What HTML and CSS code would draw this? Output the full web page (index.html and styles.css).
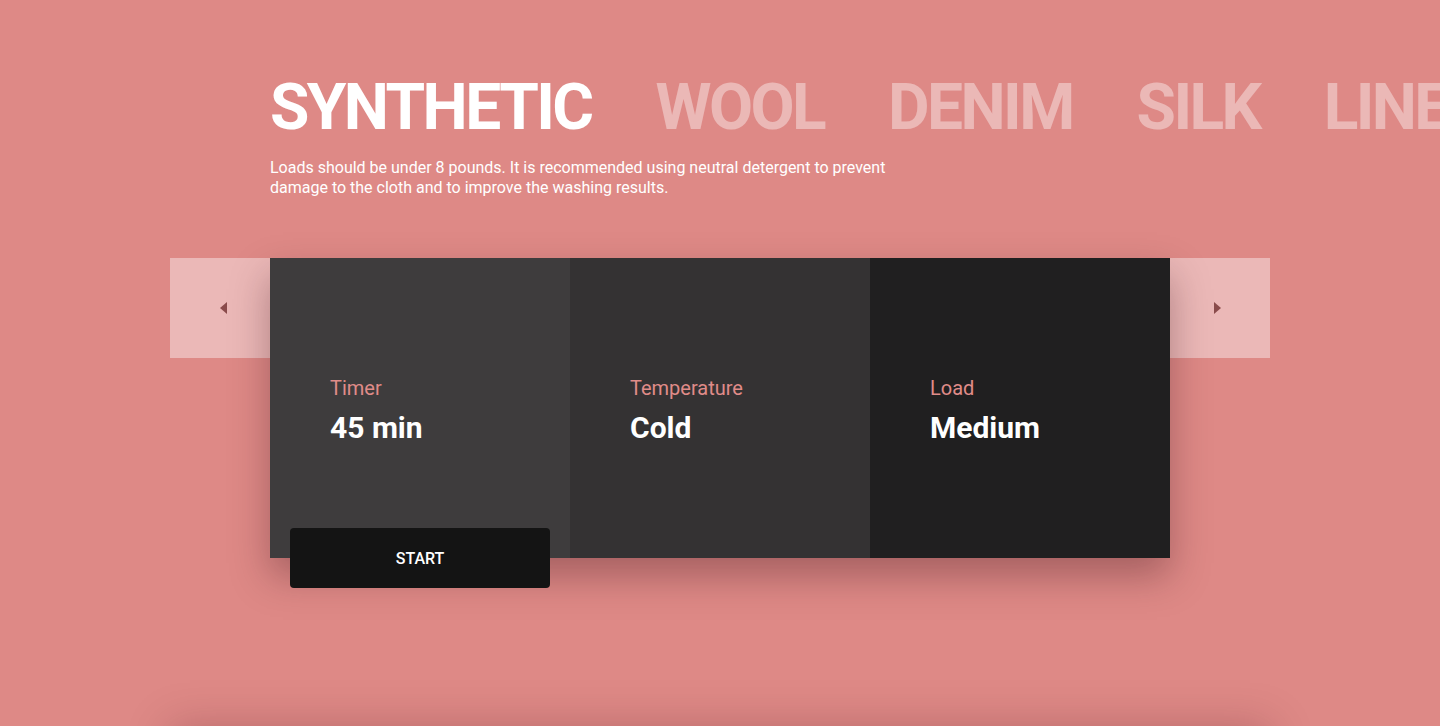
FILE: index.html
```html
<!DOCTYPE html>
<html lang="en">
<head>
<meta charset="utf-8">
<title>Washer</title>
<link rel="stylesheet" href="styles.css">
</head>
<body>
<main class="page">
  <header class="header">
    <nav class="tabs">
      <span class="tab tab-active">SYNTHETIC</span>
      <span class="tab">WOOL</span>
      <span class="tab">DENIM</span>
      <span class="tab">SILK</span>
      <span class="tab">LINEN</span>
    </nav>
    <p class="desc">Loads should be under 8 pounds. It is recommended using neutral detergent to prevent damage to the cloth and to improve the washing results.</p>
  </header>

  <section class="carousel">
    <button class="nav nav-prev" aria-label="Previous"><span class="tri tri-left"></span></button>
    <div class="card">
      <div class="panel panel-1">
        <div class="label">Timer</div>
        <div class="value">45 min</div>
      </div>
      <div class="panel panel-2">
        <div class="label">Temperature</div>
        <div class="value">Cold</div>
      </div>
      <div class="panel panel-3">
        <div class="label">Load</div>
        <div class="value">Medium</div>
      </div>
      <button class="start">START</button>
    </div>
    <button class="nav nav-next" aria-label="Next"><span class="tri tri-right"></span></button>
  </section>

  <section class="below"></section>
</main>
</body>
</html>
```

FILE: styles.css
```css
html, body {
  margin: 0;
  padding: 0;
}
body {
  background: #de8986;
  font-family: Roboto, "Liberation Sans", Arial, sans-serif;
  color: #fff;
  overflow-x: hidden;
}
.page {
  width: 1100px;
  margin: 0 auto;
  padding-top: 68px;
}
.header {
  padding-left: 100px;
}
.tabs {
  display: flex;
  white-space: nowrap;
  gap: 64px;
  height: 80px;
  line-height: 80px;
}
.tab {
  font-size: 64px;
  font-weight: 700;
  letter-spacing: -2.6px;
  color: rgba(255, 255, 255, 0.4);
  flex: none;
}
.tab-active {
  color: #fff;
}
.desc {
  margin: 10px 0 0;
  width: 640px;
  font-size: 16px;
  line-height: 20px;
}
.carousel {
  display: flex;
  align-items: flex-start;
  margin-top: 60px;
}
.nav {
  width: 100px;
  height: 100px;
  border: 0;
  padding: 0;
  background: #ebb8b7;
  display: flex;
  align-items: center;
  justify-content: center;
  flex: none;
}
.tri {
  width: 0;
  height: 0;
  border-top: 6px solid transparent;
  border-bottom: 6px solid transparent;
}
.tri-left {
  border-right: 7px solid #8a4b4b;
  margin-left: 6px;
}
.tri-right {
  border-left: 7px solid #8a4b4b;
  margin-right: 6px;
}
.card {
  position: relative;
  z-index: 1;
  width: 900px;
  height: 300px;
  display: grid;
  grid-template-columns: repeat(3, 1fr);
  box-shadow: 0 18px 36px rgba(60, 20, 30, 0.35);
  flex: none;
}
.panel {
  padding: 118px 0 0 60px;
}
.panel-1 { background: #3e3c3d; }
.panel-2 { background: #343233; }
.panel-3 { background: #201f20; }
.label {
  font-size: 20px;
  line-height: 24px;
  color: #e08c89;
}
.value {
  margin-top: 10px;
  font-size: 30px;
  line-height: 36px;
  font-weight: 700;
  color: #fff;
}
.start {
  position: absolute;
  left: 20px;
  bottom: -30px;
  width: 260px;
  height: 60px;
  border: 0;
  border-radius: 4px;
  background: #141414;
  color: #fff;
  font-family: Roboto, "Liberation Sans", Arial, sans-serif;
  font-size: 16px;
  font-weight: 500;
  cursor: pointer;
}
.below {
  margin-top: 168px;
  height: 300px;
  background: #de8986;
  box-shadow: 0 0 40px rgba(80, 20, 30, 0.25);
}
```
